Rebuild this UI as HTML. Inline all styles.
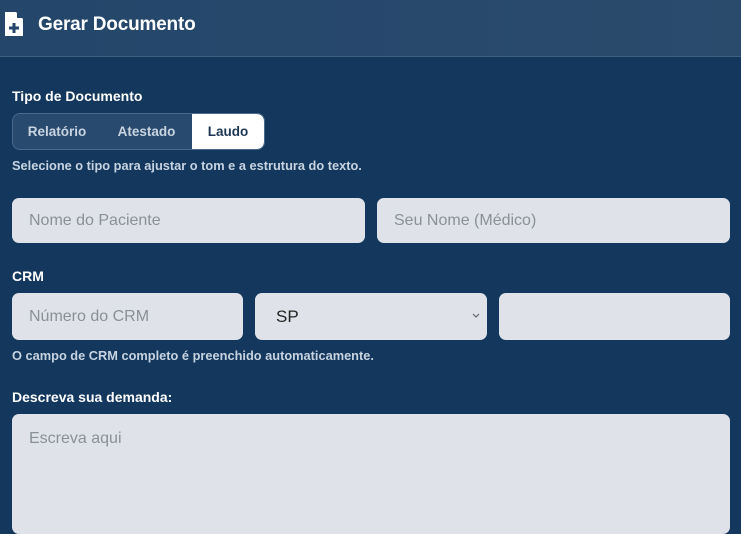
<!DOCTYPE html>
<html><head><style>
body{margin:0;width:741px;height:518px;overflow:hidden;background:#13375d;font-family:"Liberation Sans",sans-serif;}
.hdr{position:absolute;left:0;top:0;width:741px;height:56px;background:linear-gradient(90deg,#23466a,#2b4b6d);border-bottom:1px solid #3f5f80;}
.hdr .t{position:absolute;left:38px;top:14px;color:#fff;font-weight:bold;font-size:19px;letter-spacing:-0.2px}
.lbl{position:absolute;left:12px;color:#fff;font-weight:bold;font-size:14px;}
.hint{position:absolute;left:12px;color:#c7d3e0;font-weight:bold;font-size:12.8px;}
.seg{position:absolute;left:12px;top:113px;width:251px;height:35px;border:1px solid #4a6a8c;border-radius:8px;background:#284a6e;overflow:hidden;}
.seg div{position:absolute;top:0;height:35px;line-height:35px;font-weight:bold;font-size:13.5px;color:#c9d4e0;text-align:center;}
.in{position:absolute;background:#dfe3e9;border-radius:7px;color:#8a9098;font-size:16px;box-sizing:border-box;padding-left:17px;}
</style></head><body>
<div class="hdr">
<svg style="position:absolute;left:5px;top:12px" width="18" height="24" viewBox="0 0 18 24"><path d="M0 0H11L18 7V24H0Z" fill="#fff"/><path d="M12 0L18 6H12Z" fill="#23466a"/><path d="M7.5 11h3v3.5h3.5v3h-3.5v3.5h-3v-3.5H4v-3h3.5z" fill="#23466a"/></svg>
<div class="t">Gerar Documento</div></div>
<div class="lbl" style="top:88px">Tipo de Documento</div>
<div class="seg">
<div style="left:0;width:88px">Relatório</div>
<div style="left:88px;width:91px">Atestado</div>
<div style="left:179px;width:72px;background:#fff;color:#1d3653;border-radius:0 7px 7px 0">Laudo</div>
</div>
<div class="hint" style="top:158px">Selecione o tipo para ajustar o tom e a estrutura do texto.</div>
<div class="in" style="left:12px;top:198px;width:353px;height:45px;line-height:45px">Nome do Paciente</div>
<div class="in" style="left:377px;top:198px;width:353px;height:45px;line-height:45px">Seu Nome (Médico)</div>
<div class="lbl" style="top:268px">CRM</div>
<div class="in" style="left:12px;top:293px;width:231px;height:47px;line-height:47px">Número do CRM</div>
<div class="in" style="left:255px;top:293px;width:232px;height:47px;line-height:47px;color:#222;padding-left:21px;font-size:17px">SP<svg style="position:absolute;right:7px;top:20px" width="8" height="6"><path d="M1 1l3 3 3-3" stroke="#666" fill="none" stroke-width="1.2"/></svg></div>
<div class="in" style="left:499px;top:293px;width:231px;height:47px"></div>
<div class="hint" style="top:348px">O campo de CRM completo é preenchido automaticamente.</div>
<div class="lbl" style="top:389px">Descreva sua demanda:</div>
<div class="in" style="left:12px;top:414px;width:718px;height:120px;padding-top:16px">Escreva aqui</div>
</body></html>
